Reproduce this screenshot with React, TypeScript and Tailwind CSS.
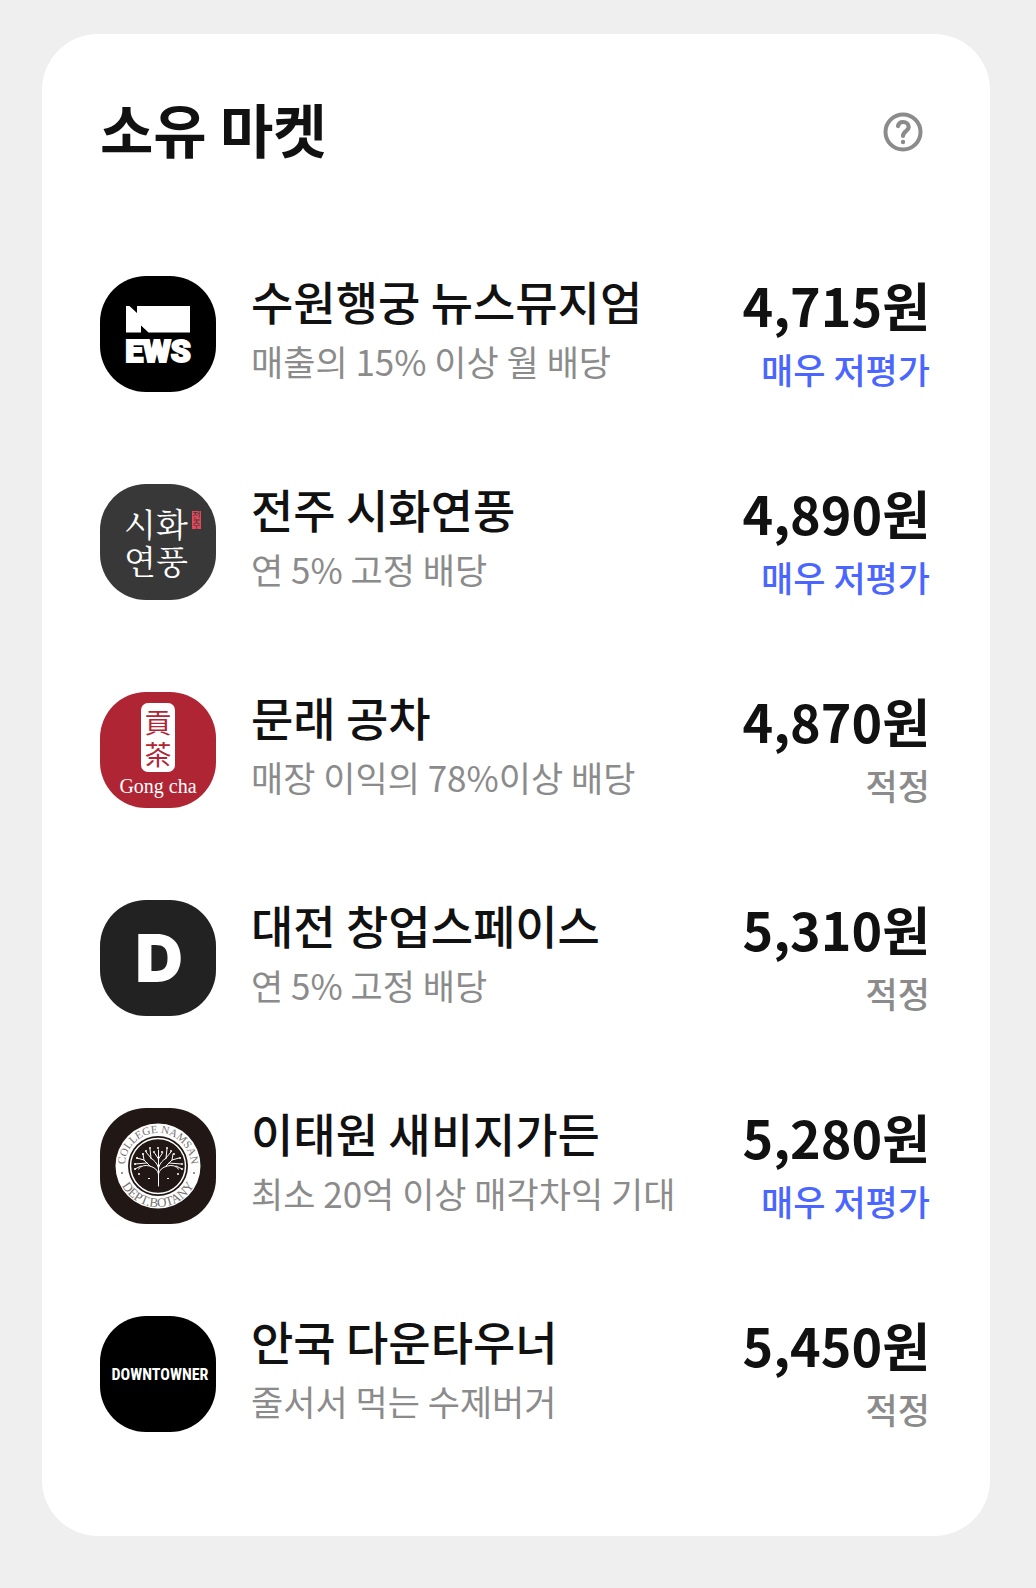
import type { ReactNode } from "react";

type Market = {
  id: string;
  name: string;
  description: string;
  price: string;
  rating: string;
  undervalued: boolean;
  logo: ReactNode;
};

function NewsLogo() {
  return (
    <svg viewBox="0 0 116 116" className="w-full bg-black" aria-hidden="true">
      <path fill="#fff" d="M26 30h3.500l7.500 7v-7h53v26.500H48.500L41 49.500v7H26z" />
      <text x="58" y="86" textAnchor="middle" fill="#fff" stroke="#fff" strokeWidth="2" className="font-[Roboto,sans-serif] text-[32px] font-black">
        EWS
      </text>
    </svg>
  );
}

function SihwaLogo() {
  return (
    <svg viewBox="0 0 116 116" className="w-full bg-[#383838]" aria-hidden="true">
      <text fill="#fff" textAnchor="middle" className="font-['Noto_Serif_CJK_KR','Noto_Sans_CJK_KR',serif] text-[33px]">
        <tspan x="56" y="53">시화</tspan>
        <tspan x="56" y="90">연풍</tspan>
      </text>
      <path fill="#e5485a" d="M92 27h9v18h-9z" />
      <text fill="#383838" textAnchor="middle" className="font-['Noto_Sans_CJK_KR',sans-serif] text-[9px]">
        <tspan x="96.500" y="35">전</tspan>
        <tspan x="96.500" y="44">주</tspan>
      </text>
    </svg>
  );
}

function GongchaLogo() {
  return (
    <svg viewBox="0 0 116 116" className="w-full bg-[#b02534]" aria-hidden="true">
      <rect x="41" y="11" width="34" height="69" rx="7" fill="#fff" />
      <text fill="#b02534" textAnchor="middle" className="font-['Noto_Sans_CJK_TC',sans-serif] text-[27px]">
        <tspan x="58" y="41">貢</tspan>
        <tspan x="58" y="73">茶</tspan>
      </text>
      <text x="58" y="101" textAnchor="middle" fill="#fff" className="font-['Liberation_Serif',serif] text-[20px]">
        Gong cha
      </text>
    </svg>
  );
}

function DLogo() {
  return (
    <svg viewBox="0 0 116 116" className="w-full bg-[#222222]" aria-hidden="true">
      <text x="59" y="82" textAnchor="middle" fill="#fff" className="font-[Inter,sans-serif] text-[66px] font-black">
        D
      </text>
    </svg>
  );
}

function SavageGardenLogo() {
  return (
    <svg viewBox="0 0 116 116" className="w-full bg-[#211715]" aria-hidden="true">
      <defs>
        <path id="seal-top" d="M25 58a33 33 0 0 1 66 0" />
        <path id="seal-bottom" d="M17 58a41 41 0 0 0 82 0" />
      </defs>
      <circle cx="58" cy="58" r="42.500" fill="#fff" />
      <circle cx="58" cy="58" r="30" fill="#211715" />
      <circle cx="58" cy="58" r="27.500" fill="none" stroke="#fff" strokeWidth="1.500" />
      <g fill="#77706e" textAnchor="middle" className="font-['Liberation_Serif',serif]">
        <text className="text-[11px]"><textPath href="#seal-top" startOffset="50%">COLLEGE NAMSAN</textPath></text>
        <text className="text-[13px]"><textPath href="#seal-bottom" startOffset="50%">DEPT.BOTANY</textPath></text>
      </g>
      <g fill="#77706e">
        <circle cx="22" cy="65" r="1" />
        <circle cx="94" cy="65" r="1" />
      </g>
      <g fill="none" stroke="#fff" strokeWidth="1" strokeLinecap="round">
        <path d="M58.500 78V56M58.500 66q-1-6-9-8-7-2-11 3M58.500 66q1-6 9-8 7-2 11 3" />
        <path d="M58.500 60q-2-7-8-10M58.500 60q2-7 8-10M58.500 57v-15M58.500 51l-4-6M58.500 51l4-6" />
        <path d="M50 58l-6-6-7-2M44 52l-1-6M47 55l-12 1M66 58l6-6 7-2M72 52l1-6M69 55l12 1M51 50l-1-9M51 50l-5-6M66 50l1-9M66 50l5-6M41 58l-6 3M76 58l6 3" />
      </g>
      <g fill="#fff">
        <path d="M48 70h2v1h-2zM67 70h2v1h-2z" />
        {[[37, 50], [43, 46], [46, 43], [50, 40], [54, 44], [58, 40], [62, 44], [67, 40], [71, 43], [74, 46], [80, 50], [35, 56], [82, 56], [35, 61], [82, 61], [39, 66], [78, 66]].map(([x, y]) => (
          <circle key={`${x}-${y}`} cx={x} cy={y} r="1" />
        ))}
      </g>
    </svg>
  );
}

function DowntownerLogo() {
  return (
    <svg viewBox="0 0 116 116" className="w-full bg-black" aria-hidden="true">
      <text x="60" y="64" textAnchor="middle" fill="#fff" className="font-['Liberation_Sans_Narrow','Roboto_Condensed',Roboto,sans-serif] text-[16px] font-bold">
        DOWNTOWNER
      </text>
    </svg>
  );
}

const markets: Market[] = [
  { id: "news", name: "수원행궁 뉴스뮤지엄", description: "매출의 15% 이상 월 배당", price: "4,715", rating: "매우 저평가", undervalued: true, logo: <NewsLogo /> },
  { id: "sihwa", name: "전주 시화연풍", description: "연 5% 고정 배당", price: "4,890", rating: "매우 저평가", undervalued: true, logo: <SihwaLogo /> },
  { id: "gongcha", name: "문래 공차", description: "매장 이익의 78%이상 배당", price: "4,870", rating: "적정", undervalued: false, logo: <GongchaLogo /> },
  { id: "startup", name: "대전 창업스페이스", description: "연 5% 고정 배당", price: "5,310", rating: "적정", undervalued: false, logo: <DLogo /> },
  { id: "garden", name: "이태원 새비지가든", description: "최소 20억 이상 매각차익 기대", price: "5,280", rating: "매우 저평가", undervalued: true, logo: <SavageGardenLogo /> },
  { id: "downtowner", name: "안국 다운타우너", description: "줄서서 먹는 수제버거", price: "5,450", rating: "적정", undervalued: false, logo: <DowntownerLogo /> },
];

function MarketRow({ market }: { market: Market }) {
  return (
    <li className="flex items-start">
      <div className="w-[116px] h-[116px] shrink-0 rounded-[46px] overflow-hidden">{market.logo}</div>
      <div className="ml-[35px] flex-1 min-w-0">
        <h2 className="text-[46px] leading-[48px] font-medium">{market.name}</h2>
        <p className="mt-3 text-[35px] leading-[50px] text-[#8b8b8b]">{market.description}</p>
      </div>
      <div className="shrink-0 text-right">
        <p className="text-[52px] leading-[58px] font-bold">{market.price}원</p>
        <p className={`mt-3 text-[35px] leading-[46px] font-medium ${market.undervalued ? "text-[#4a66ff]" : "text-[#8b8b8b]"}`}>
          {market.rating}
        </p>
      </div>
    </li>
  );
}

export default function App() {
  return (
    <main className="min-h-screen bg-[#efefef] pt-[34px] pr-[46px] pb-[52px] pl-[42px] font-['Noto_Sans_CJK_KR',sans-serif] text-[#111111]">
      <section className="rounded-[56px] bg-white pt-[58px] pr-[60px] pb-[104px] pl-[58px]">
        <header className="flex items-center justify-between">
          <h1 className="pb-2 text-[58px] leading-[72px] font-bold">소유 마켓</h1>
          <button type="button" aria-label="도움말" className="mr-[7px] text-[#8b8b8b]">
            <svg viewBox="0 0 40 40" className="w-10 h-10" fill="none" stroke="currentColor" strokeWidth="4" strokeLinecap="round">
              <circle cx="20" cy="20" r="17.500" />
              <path strokeWidth="4.200" d="M15 14c.5-2.500 2.500-4 5-4 3.500 0 5.700 2.200 5.700 5 0 4-5.700 4.500-5.700 9" />
              <circle cx="20" cy="30" r="2.200" fill="currentColor" stroke="none" />
            </svg>
          </button>
        </header>
        <ul className="mt-[104px] flex flex-col gap-[92px]">
          {markets.map((market) => (
            <MarketRow key={market.id} market={market} />
          ))}
        </ul>
      </section>
    </main>
  );
}
